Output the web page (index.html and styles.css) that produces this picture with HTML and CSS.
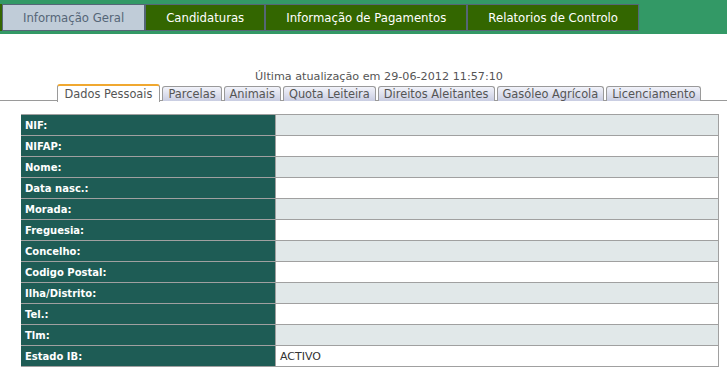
FILE: index.html
```html
<!DOCTYPE html>
<html lang="pt">
<head>
    <meta charset="UTF-8">
    <title>Informação Geral</title>
    <link rel="stylesheet" href="styles.css">
</head>
<body>
    <div class="topbar">
        <ul class="menu">
            <li class="active">Informação Geral</li>
            <li>Candidaturas</li>
            <li>Informação de Pagamentos</li>
            <li>Relatorios de Controlo</li>
        </ul>
    </div>

    <div class="updated">Última atualização em 29-06-2012 11:57:10</div>

    <ul class="tabs">
        <li class="active">Dados Pessoais</li>
        <li>Parcelas</li>
        <li>Animais</li>
        <li>Quota Leiteira</li>
        <li>Direitos Aleitantes</li>
        <li>Gasóleo Agrícola</li>
        <li>Licenciamento</li>
    </ul>

    <table class="details">
        <tr><th>NIF:</th><td></td></tr>
        <tr><th>NIFAP:</th><td></td></tr>
        <tr><th>Nome:</th><td></td></tr>
        <tr><th>Data nasc.:</th><td></td></tr>
        <tr><th>Morada:</th><td></td></tr>
        <tr><th>Freguesia:</th><td></td></tr>
        <tr><th>Concelho:</th><td></td></tr>
        <tr><th>Codigo Postal:</th><td></td></tr>
        <tr><th>Ilha/Distrito:</th><td></td></tr>
        <tr><th>Tel.:</th><td></td></tr>
        <tr><th>Tlm:</th><td></td></tr>
        <tr><th>Estado IB:</th><td>ACTIVO</td></tr>
    </table>
</body>
</html>
```

FILE: styles.css
```css
body {
    margin: 0;
    font-family: "DejaVu Sans", Verdana, sans-serif;
    background-color: #ffffff;
}
.topbar {
    background-color: #339966;
    height: 34px;
    padding-top: 4px;
    box-sizing: border-box;
}
.menu {
    display: flex;
    list-style: none;
    margin: 0;
    padding: 0;
    border-left: 2px solid #336600;
    width: max-content;
}
.menu li {
    background-color: #336600;
    color: #ffffff;
    border: 1px solid #556677;
    height: 25px;
    line-height: 26px;
    padding: 0 20px;
    font-size: 11.7px;
}
.menu li.active {
    background-color: #c0ccd8;
    color: #556677;
}
.updated {
    margin-top: 36px;
    padding-left: 31px;
    text-align: center;
    color: #555555;
    font-size: 11.2px;
    line-height: 13px;
}
.tabs {
    display: flex;
    justify-content: center;
    gap: 2px;
    list-style: none;
    margin: 2px 0 0;
    padding: 0 0 0 31px;
    border-bottom: 1px solid #9a9a9a;
    height: 15px;
}
.tabs li {
    margin-top: 1px;
    height: 14px;
    padding: 0 5px;
    border: 1px solid #9a9a9a;
    border-bottom: none;
    border-radius: 3px 3px 0 0;
    background: linear-gradient(#f2f3fa, #c9cde2);
    color: #555555;
    font-size: 11.4px;
    line-height: 14px;
}
.tabs li.active {
    margin-top: -1px;
    height: 16px;
    padding: 0 7px;
    border-top: 2px solid #f0a830;
    background: #ffffff;
    line-height: 17px;
}
.details {
    margin: 13px 0 0 21px;
    width: 698px;
    border-collapse: collapse;
    border-top: 1px solid #e4e4e4;
}
.details th,
.details td {
    height: 20px;
    padding: 0 4px;
    border: 1px solid #a0a0a0;
    text-align: left;
}
.details th {
    width: 246px;
    border-left: none;
    background-color: #1e5c55;
    color: #ffffff;
    font-size: 10px;
}
.details td {
    color: #333333;
    font-size: 11px;
}
.details tr:nth-child(odd) td {
    background-color: #e1e8e9;
}
```
